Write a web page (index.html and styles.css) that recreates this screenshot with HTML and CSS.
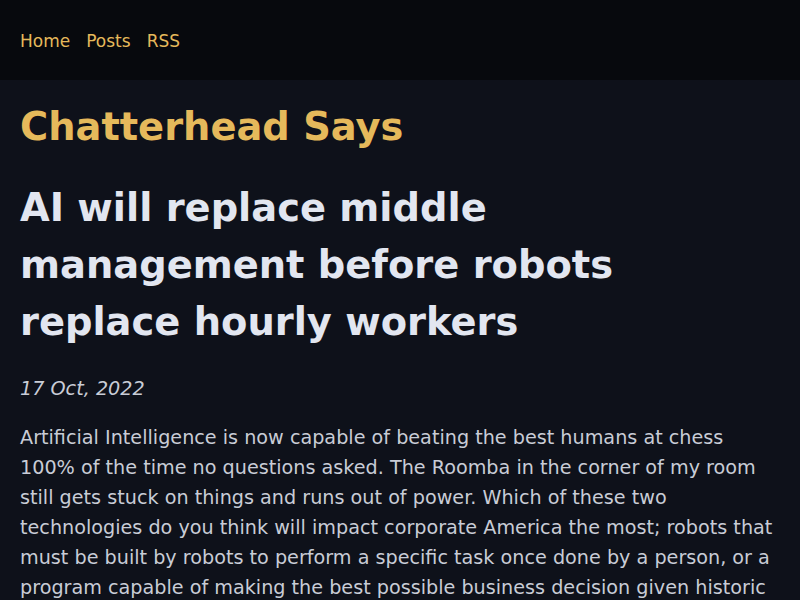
FILE: index.html
```html
<!DOCTYPE html>
<html lang="en">
<head>
<meta charset="utf-8">
<title>Chatterhead Says</title>
<link rel="stylesheet" href="styles.css">
</head>
<body>
<header class="site-header">
  <nav class="nav">
    <a href="#">Home</a>
    <a href="#">Posts</a>
    <a href="#">RSS</a>
  </nav>
</header>
<main class="content">
  <div class="site-title">Chatterhead Says</div>
  <h1 class="post-title">AI will replace middle management before robots replace hourly workers</h1>
  <p class="post-date">17 Oct, 2022</p>
  <p class="post-body">Artificial Intelligence is now capable of beating the best humans at chess 100% of the time no questions asked. The Roomba in the corner of my room still gets stuck on things and runs out of power. Which of these two technologies do you think will impact corporate America the most; robots that must be built by robots to perform a specific task once done by a person, or a program capable of making the best possible business decision given historic data and current market conditions?</p>
</main>
</body>
</html>
```
FILE: styles.css
```css
html, body {
  margin: 0;
  padding: 0;
}
body {
  background: #0e111a;
  color: #c8ccd6;
  font-family: "DejaVu Sans", sans-serif;
}
.site-header {
  background: #07090d;
  height: 80px;
  box-sizing: border-box;
  display: flex;
  align-items: center;
  padding: 2px 20px 0;
}
.nav {
  display: flex;
  gap: 16px;
  font-size: 17px;
}
.nav a {
  color: #e5b95b;
  text-decoration: none;
}
.content {
  padding: 0 20px;
}
.site-title {
  color: #e5b95b;
  font-weight: bold;
  font-size: 38.4px;
  line-height: 57px;
  margin-top: 18px;
}
.post-title {
  color: #e2e6f0;
  font-size: 38.4px;
  line-height: 57px;
  margin: 24px 0 0;
}
.post-date {
  font-style: italic;
  font-size: 19.2px;
  line-height: 30px;
  margin: 24px 0 0;
  color: #c8ccd6;
}
.post-body {
  font-size: 19.2px;
  line-height: 30px;
  margin: 19px 0 0;
}
```
